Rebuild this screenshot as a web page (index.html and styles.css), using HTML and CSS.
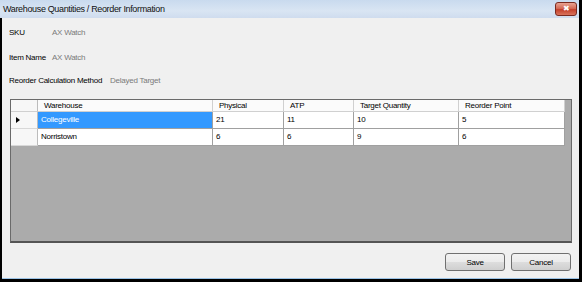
FILE: index.html
```html
<!DOCTYPE html>
<html lang="en">
<head>
  <meta charset="UTF-8" />
  <title>Warehouse Quantities / Reorder Information</title>
  <link rel="stylesheet" href="styles.css">
</head>
<body>
  <div class="titlebar">
    <span class="title">Warehouse Quantities / Reorder Information</span>
    <span class="close-btn">&#x2716;</span>
  </div>

  <div class="content">
    <div class="field sku">
      <span class="label">SKU</span>
      <span class="value">AX Watch</span>
    </div>
    <div class="field item">
      <span class="label">Item Name</span>
      <span class="value">AX Watch</span>
    </div>
    <div class="field method">
      <span class="label">Reorder Calculation Method</span>
      <span class="value">Delayed Target</span>
    </div>

    <div class="grid">
      <div class="grid-row header">
        <div class="rowhead"></div>
        <div class="cell c-wh">Warehouse</div>
        <div class="cell c-ph">Physical</div>
        <div class="cell c-atp">ATP</div>
        <div class="cell c-tq">Target Quantity</div>
        <div class="cell c-rp">Reorder Point</div>
      </div>
      <div class="grid-row">
        <div class="rowhead"><span class="arrow"></span></div>
        <div class="cell c-wh selected">Collegeville</div>
        <div class="cell c-ph">21</div>
        <div class="cell c-atp">11</div>
        <div class="cell c-tq">10</div>
        <div class="cell c-rp">5</div>
      </div>
      <div class="grid-row">
        <div class="rowhead"></div>
        <div class="cell c-wh">Norristown</div>
        <div class="cell c-ph">6</div>
        <div class="cell c-atp">6</div>
        <div class="cell c-tq">9</div>
        <div class="cell c-rp">6</div>
      </div>
    </div>

    <div class="buttons">
      <button>Save</button>
      <button>Cancel</button>
    </div>
  </div>
</body>
</html>
```

FILE: styles.css
```css
* { box-sizing: border-box; }
body {
  margin: 0;
  width: 582px;
  height: 282px;
  background: #000;
  font-family: "Liberation Sans", Arial, sans-serif;
  font-size: 8px;
  letter-spacing: -0.25px;
  color: #000;
  overflow: hidden;
}
.titlebar {
  width: 579px;
  height: 18px;
  background: linear-gradient(#c9daee, #d9e5f3 60%, #cfdcee);
  display: flex;
  align-items: center;
  justify-content: space-between;
  padding: 0 2px 0 3px;
}
.title {
  font-size: 9px;
  letter-spacing: -0.35px;
  color: #111;
}
.close-btn {
  width: 22px;
  height: 14px;
  border: 1px solid #7a2a20;
  border-radius: 3px;
  background: linear-gradient(#e8a291, #d46b56 45%, #c4402b 55%, #d9735c);
  color: #fff;
  font-size: 8px;
  line-height: 12px;
  text-align: center;
  letter-spacing: 0;
}
.content {
  margin-left: 2px;
  width: 577px;
  height: 261px;
  background: #f0f0f0;
  border-bottom: 1px solid #9cc3e6;
  padding: 8px 0 0 7px;
}
.field {
  display: flex;
  height: 13px;
  line-height: 13px;
  white-space: nowrap;
}
.item { margin-top: 12px; }
.method { margin-top: 10px; }
.label {
  width: 35px;
  margin-right: 8px;
}
.method .label { width: 93px; }
.value {
  color: #7a7a7a;
}
.grid {
  margin: 12px 0 0 1px;
  width: 562px;
  height: 144px;
  background: #ababab;
  border: 1px solid #6a6a6a;
  border-bottom: 2px solid #555;
}
.grid-row {
  display: flex;
  height: 17px;
  line-height: 16px;
}
.grid-row.header {
  height: 12px;
  line-height: 12px;
}
.rowhead {
  width: 27px;
  background: #f7f7f7;
  border-right: 1px solid #bcbcbc;
  border-bottom: 1px solid #d8d8d8;
  position: relative;
}
.arrow {
  position: absolute;
  left: 5px;
  top: 5px;
  border-left: 4px solid #000;
  border-top: 3.5px solid transparent;
  border-bottom: 3.5px solid transparent;
}
.cell {
  background: #fff;
  border-right: 1px solid #a0a0a0;
  border-bottom: 1px solid #a0a0a0;
  padding-left: 3px;
  white-space: nowrap;
}
.header .cell {
  background: #fbfbfb;
  border-right: 1px solid #d0d0d0;
  border-bottom: 1px solid #d0d0d0;
  padding-left: 6px;
}
.header .rowhead {
  border-bottom: 1px solid #d0d0d0;
}
.c-wh { width: 175px; }
.c-ph { width: 71px; }
.c-atp { width: 70px; }
.c-tq { width: 105px; }
.c-rp { width: 106px; }
.cell.selected {
  background: #3399ff;
  color: #fff;
}
.buttons {
  display: flex;
  justify-content: flex-end;
  gap: 6px;
  margin: 10px 8px 0 0;
}
.buttons button {
  width: 60px;
  height: 18px;
  font-family: inherit;
  font-size: 8px;
  letter-spacing: -0.25px;
  color: #000;
  border: 1px solid #707070;
  border-radius: 3px;
  background: linear-gradient(#f2f2f2, #ebebeb 50%, #dddddd 51%, #cfcfcf);
  padding: 0;
}
```
